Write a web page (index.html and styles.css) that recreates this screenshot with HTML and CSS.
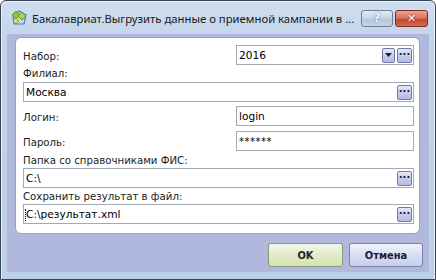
FILE: index.html
```html
<!DOCTYPE html>
<html lang="ru">
<head>
    <meta charset="UTF-8">
    <title>Бакалавриат.Выгрузить данные о приемной кампании</title>
    <link rel="stylesheet" href="styles.css">
</head>
<body>
    <div class="window">
        <div class="titlebar">
            <svg class="app-icon" width="18" height="18" viewBox="0 0 18 18">
                <path d="M3 8 L9 2 L16 6 L14 15 L4 15 Z" fill="none" stroke="#5a78b4" stroke-width="1.2"/>
                <path d="M6 2 L10 6 L6 10 L2 6 Z" fill="#8cc63f" stroke="#4f8a1e" stroke-width="0.8"/>
                <path d="M12 3 L16 7 L12 11 L8 7 Z" fill="#a8d84a" stroke="#4f8a1e" stroke-width="0.8"/>
                <path d="M6 9 L9 12 L6 15 L3 12 Z" fill="#e8e04a" stroke="#8a8a1e" stroke-width="0.8"/>
            </svg>
            <span class="title">Бакалавриат.Выгрузить данные о приемной кампании в ...</span>
            <div class="caption-buttons">
                <span class="cap-btn help">?</span>
                <span class="cap-btn close">✕</span>
            </div>
        </div>

        <div class="client">
            <div class="panel">
                <div class="row row-combo">
                    <span class="label">Набор:</span>
                    <div class="edit short">
                        <span class="value">2016</span>
                        <span class="btn arrow"><svg width="7" height="4" viewBox="0 0 7 4"><path d="M0 0 H7 L3.5 4 Z" fill="#1b1f33"/></svg></span>
                        <span class="btn dots">···</span>
                    </div>
                </div>

                <div class="label line lbl-filial">Филиал:</div>
                <div class="edit">
                    <span class="value">Москва</span>
                    <span class="btn dots">···</span>
                </div>

                <div class="row row-login">
                    <span class="label">Логин:</span>
                    <div class="edit short"><span class="value">login</span></div>
                </div>
                <div class="row row-pass">
                    <span class="label">Пароль:</span>
                    <div class="edit short"><span class="value stars">******</span></div>
                </div>

                <div class="label line">Папка со справочниками ФИС:</div>
                <div class="edit">
                    <span class="value">C:\</span>
                    <span class="btn dots">···</span>
                </div>

                <div class="label line">Сохранить результат в файл:</div>
                <div class="edit">
                    <span class="value"><span class="caret"></span>C:\результат.xml</span>
                    <span class="btn dots">···</span>
                </div>
            </div>

            <div class="buttons">
                <span class="button ok">OK</span>
                <span class="button cancel">Отмена</span>
            </div>
        </div>
    </div>
</body>
</html>
```

FILE: styles.css
```css
* {
    box-sizing: border-box;
    margin: 0;
    padding: 0;
}
body {
    width: 436px;
    height: 280px;
    overflow: hidden;
    background: #ffffff;
    font-family: 'DejaVu Sans', 'Liberation Sans', sans-serif;
    font-size: 10.2px;
    color: #000;
}
.window {
    width: 436px;
    height: 280px;
    border: 1px solid #3a4656;
    border-radius: 6px 6px 0 0;
    background: linear-gradient(#d0deef, #c2d4ea 40px, #bcd0e8);
    padding: 0 6px 7px 6px;
    display: flex;
    flex-direction: column;
    box-shadow: inset 1px 1px 0 #e6eef8, inset -1px 0 0 #e6eef8;
}
.titlebar {
    height: 33px;
    display: flex;
    align-items: center;
    padding-left: 3px;
}
.app-icon {
    flex-shrink: 0;
    margin-right: 4px;
    margin-top: 1px;
}
.title {
    font-family: 'Noto Sans', 'DejaVu Sans', sans-serif;
    font-size: 11.3px;
    color: #1a1a1a;
    white-space: nowrap;
    flex: 1;
    margin-top: 2px;
}
.caption-buttons {
    display: flex;
    gap: 2px;
    margin-right: 1px;
    margin-top: 1px;
}
.cap-btn {
    width: 32px;
    height: 17px;
    border: 1px solid #6d7f96;
    border-radius: 3px;
    display: flex;
    align-items: center;
    justify-content: center;
    font-weight: bold;
    color: #fff;
}
.cap-btn.help {
    background: linear-gradient(#e2ebf5, #c4d3e4 50%, #b3c5da 51%, #c6d5e6);
    color: #eef3f8;
    text-shadow: 0 0 2px #5b6f8a;
    font-size: 12px;
}
.cap-btn.close {
    width: 33px;
    border-color: #7d2a22;
    background: linear-gradient(#eaa592, #d9705c 50%, #c4432d 51%, #d56a4f);
    font-size: 11px;
    text-shadow: 0 0 2px #6b1a10;
}
.client {
    flex: 1;
    background: #b0b8de;
    display: flex;
    flex-direction: column;
    padding: 3px 9px 0 8px;
}
.panel {
    background: #fff;
    border: 1px solid #9aa2b8;
    border-radius: 6px;
    padding: 7px 5px 7px 7px;
}
.label {
    color: #1c1c1c;
    line-height: 14px;
    white-space: nowrap;
}
.line {
    height: 14px;
}
.lbl-filial {
    margin-top: 2px;
    margin-bottom: 1px;
}
.row {
    display: flex;
    justify-content: space-between;
    align-items: center;
}
.row .label {
    margin-top: 4px;
}
.row-login {
    margin-top: 4px;
}
.row-pass {
    margin-top: 5px;
    margin-bottom: 3px;
}
.edit {
    height: 20px;
    border: 1px solid #a3aab6;
    background: #fff;
    display: flex;
    align-items: center;
    padding: 0 1px 0 2px;
    margin-bottom: 2px;
    font-size: 10.6px;
}
.row .edit {
    margin-bottom: 0;
}
.edit.short {
    width: 178px;
}
.value {
    flex: 1;
    white-space: nowrap;
    position: relative;
}
.stars {
    font-size: 10px;
    letter-spacing: 0.5px;
}
.caret {
    position: absolute;
    left: -1px;
    top: 1px;
    height: 12px;
    border-left: 1px dotted #000;
}
.btn {
    width: 15px;
    height: 15px;
    border: 1px solid #6f78a8;
    border-radius: 2px;
    background: linear-gradient(#e4e8fa, #c4caec 55%, #b4bce4);
    display: flex;
    align-items: center;
    justify-content: center;
    margin-left: 2px;
    color: #1b1f33;
    font-weight: bold;
    font-size: 10px;
    line-height: 1;
}
.btn.arrow {
    width: 13px;
}
.buttons {
    display: flex;
    justify-content: flex-end;
    gap: 6px;
    margin-top: 9px;
    margin-right: -3px;
}
.button {
    height: 24px;
    border: 1px solid #7c84a4;
    border-radius: 3px;
    display: flex;
    align-items: center;
    justify-content: center;
    font-family: 'DejaVu Sans Condensed', 'DejaVu Sans', sans-serif;
    font-weight: bold;
    font-size: 11px;
    color: #1c2030;
}
.button.ok {
    width: 75px;
    background: linear-gradient(#f4f8ea, #e2ecc8 50%, #d3e2b0);
    border-color: #8a9a78;
}
.button.cancel {
    width: 74px;
    background: linear-gradient(#f0f2fc, #d8ddf4 50%, #c7cdee);
}
```
